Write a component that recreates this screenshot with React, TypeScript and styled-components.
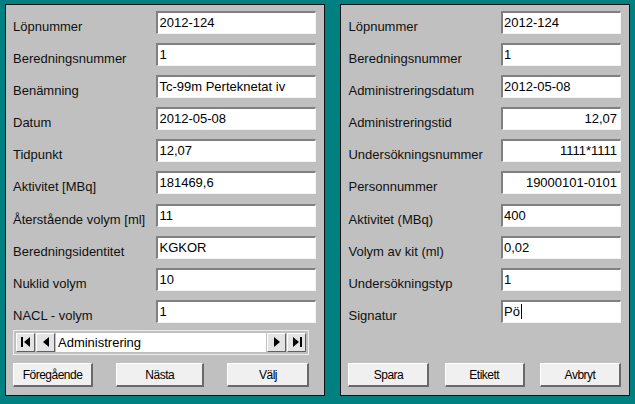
import React from "react";
import styled, { createGlobalStyle } from "styled-components";

const GlobalStyle = createGlobalStyle`
  html, body {
    margin: 0;
    padding: 0;
    background: #008080;
    font-family: "Liberation Sans", Arial, sans-serif;
    font-weight: normal;
  }
`;

type Field = { label: string; value: string; align?: "left" | "right"; caret?: boolean };

const preparation: Field[] = [
  { label: "Löpnummer", value: "2012-124" },
  { label: "Beredningsnummer", value: "1" },
  { label: "Benämning", value: "Tc-99m Perteknetat iv" },
  { label: "Datum", value: "2012-05-08" },
  { label: "Tidpunkt", value: "12,07" },
  { label: "Aktivitet [MBq]", value: "181469,6" },
  { label: "Återstående volym [ml]", value: "11" },
  { label: "Beredningsidentitet", value: "KGKOR" },
  { label: "Nuklid volym", value: "10" },
  { label: "NACL - volym", value: "1" },
];

const administration: Field[] = [
  { label: "Löpnummer", value: "2012-124" },
  { label: "Beredningsnummer", value: "1" },
  { label: "Administreringsdatum", value: "2012-05-08" },
  { label: "Administreringstid", value: "12,07", align: "right" },
  { label: "Undersökningsnummer", value: "1111*1111", align: "right" },
  { label: "Personnummer", value: "19000101-0101", align: "right" },
  { label: "Aktivitet (MBq)", value: "400" },
  { label: "Volym av kit (ml)", value: "0,02" },
  { label: "Undersökningstyp", value: "1" },
  { label: "Signatur", value: "Pö", caret: true },
];

const FirstIcon = () => (
  <svg width="12" height="12" viewBox="0 0 12 12">
    <rect x="1" y="1" width="2" height="10" fill="#000" />
    <polygon points="10,1 10,11 4,6" fill="#000" />
  </svg>
);

const PrevIcon = () => (
  <svg width="12" height="12" viewBox="0 0 12 12">
    <polygon points="9,1 9,11 3,6" fill="#000" />
  </svg>
);

const NextIcon = () => (
  <svg width="12" height="12" viewBox="0 0 12 12">
    <polygon points="3,1 3,11 9,6" fill="#000" />
  </svg>
);

const LastIcon = () => (
  <svg width="12" height="12" viewBox="0 0 12 12">
    <polygon points="2,1 2,11 8,6" fill="#000" />
    <rect x="9" y="1" width="2" height="10" fill="#000" />
  </svg>
);

const FieldGrid = ({ fields, inputWidth }: { fields: Field[]; inputWidth: number }) => (
  <StyledForm $inputWidth={inputWidth}>
    {fields.map((f) => (
      <React.Fragment key={f.label}>
        <StyledLabel>{f.label}</StyledLabel>
        <StyledInput $align={f.align ?? "left"}>
          {f.value}
          {f.caret && <StyledCaret />}
        </StyledInput>
      </React.Fragment>
    ))}
  </StyledForm>
);

const App = () => {
  return (
    <>
      <GlobalStyle />
      <StyledScreen>
        <StyledPanel $width={321}>
          <FieldGrid fields={preparation} inputWidth={160} />
          <StyledNavigator>
            <StyledNavButton>
              <FirstIcon />
            </StyledNavButton>
            <StyledNavButton>
              <PrevIcon />
            </StyledNavButton>
            <StyledNavText>Administrering</StyledNavText>
            <StyledNavButton>
              <NextIcon />
            </StyledNavButton>
            <StyledNavButton>
              <LastIcon />
            </StyledNavButton>
          </StyledNavigator>
          <StyledButtonRow $inset={7}>
            <StyledButton $width={80}>Föregående</StyledButton>
            <StyledButton $width={88}>Nästa</StyledButton>
            <StyledButton $width={82}>Välj</StyledButton>
          </StyledButtonRow>
        </StyledPanel>
        <StyledPanel $width={290}>
          <FieldGrid fields={administration} inputWidth={120} />
          <StyledButtonRow $inset={0}>
            <StyledButton $width={81}>Spara</StyledButton>
            <StyledButton $width={80}>Etikett</StyledButton>
            <StyledButton $width={81}>Avbryt</StyledButton>
          </StyledButtonRow>
        </StyledPanel>
      </StyledScreen>
    </>
  );
};

export default App;

const StyledScreen = styled.div`
  display: flex;
  gap: 15px;
  width: 635px;
  height: 404px;
  padding: 4px 5px 8px;
  box-sizing: border-box;
  background: #008080;
`;

const StyledPanel = styled.section<{ $width: number }>`
  display: flex;
  flex-direction: column;
  width: ${({ $width }) => $width}px;
  box-sizing: border-box;
  padding: 6px 8px 8px 7px;
  background: #c0c0c0;
  border: 1px solid #101010;
`;

const StyledForm = styled.div<{ $inputWidth: number }>`
  display: grid;
  grid-template-columns: 1fr ${({ $inputWidth }) => $inputWidth}px;
  row-gap: 9.1px;
  align-items: end;
`;

const StyledLabel = styled.div`
  font-size: 13px;
  line-height: 15px;
  color: #111;
  white-space: nowrap;
  padding-bottom: 0;
`;

const StyledInput = styled.div<{ $align: "left" | "right" }>`
  position: relative;
  display: flex;
  align-items: flex-start;
  justify-content: ${({ $align }) => ($align === "right" ? "flex-end" : "flex-start")};
  height: 23px;
  box-sizing: border-box;
  padding: 2px 3px 0 1px;
  background: #fff;
  border-style: solid;
  border-width: 2px 1px 1px 2px;
  border-color: #808080 #f4f4f4 #f4f4f4 #808080;
  font-size: 13px;
  line-height: 15px;
  color: #000;
  white-space: nowrap;
  overflow: hidden;
`;

const StyledCaret = styled.span`
  display: inline-block;
  width: 1px;
  height: 15px;
  margin-left: 1px;
  background: #000;
`;

const StyledNavigator = styled.div`
  display: flex;
  align-items: stretch;
  height: 25px;
  margin: 7px 7px 0 0;
  padding: 2px;
  box-sizing: border-box;
  border: 1px solid #ececec;
  background: #c0c0c0;
  gap: 1px;
`;

const StyledNavButton = styled.div`
  display: flex;
  align-items: center;
  justify-content: center;
  width: 19px;
  box-sizing: border-box;
  background: #e4e4e4;
  border-style: solid;
  border-width: 1px;
  border-color: #ffffff #606060 #606060 #ffffff;
`;

const StyledNavText = styled.div`
  flex: 1;
  display: flex;
  align-items: center;
  padding-left: 2px;
  background: #fff;
  font-size: 13px;
  color: #000;
`;

const StyledButtonRow = styled.div<{ $inset: number }>`
  display: flex;
  justify-content: space-between;
  margin-top: auto;
  margin-right: ${({ $inset }) => $inset}px;
`;

const StyledButton = styled.button<{ $width: number }>`
  width: ${({ $width }) => $width}px;
  height: 24px;
  padding: 0;
  background: #f0f0f0;
  border-style: solid;
  border-width: 1px 2px 2px 1px;
  border-color: #ffffff #6a6a6a #6a6a6a #ffffff;
  font-family: "Liberation Sans", Arial, sans-serif;
  font-size: 12px;
  letter-spacing: -0.5px;
  color: #000;
`;
